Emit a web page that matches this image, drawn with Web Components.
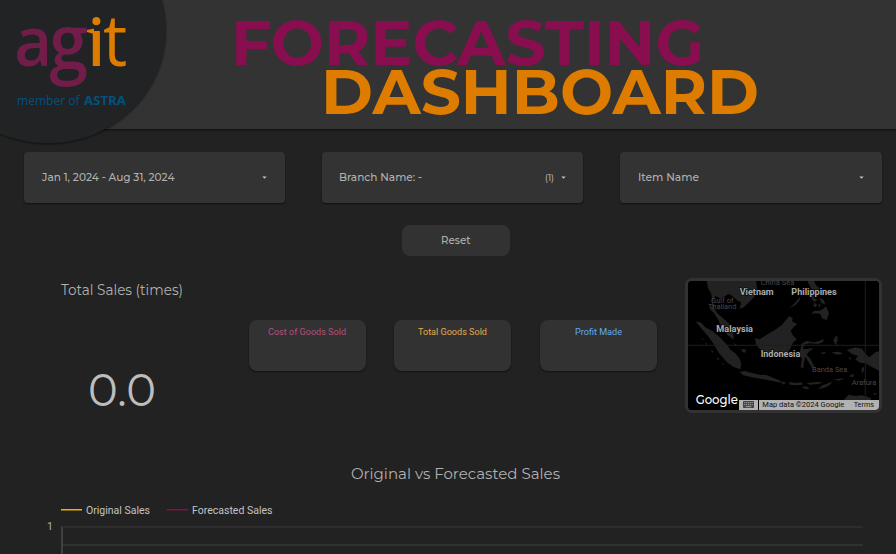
<!DOCTYPE html>
<html lang="en">
<head>
<meta charset="utf-8">
<title>Forecasting Dashboard</title>
<style>
html,body{margin:0;background:#222;height:554px;overflow:hidden}
body{font-family:Montserrat,Inter,sans-serif;color:#b1b1b1}
</style>
</head>
<body>
<forecast-dashboard></forecast-dashboard>
<script>
// A single line of text set to an exact measure.
class FitText extends HTMLElement{
  connectedCallback(){
    const a=(n,d)=>this.getAttribute(n)||d;
    const w=a('w',100),h=a('h',16);
    this.attachShadow({mode:'open'}).innerHTML=`<style>:host{display:block;flex:none;width:${w}px;height:${h}px}svg{display:block;overflow:visible}</style>
    <svg width="${w}" height="${h}"><text x="0" y="${a('base',12)}" textLength="${w}" lengthAdjust="spacingAndGlyphs" font-family="${a('font','Montserrat, Inter')}, sans-serif" font-size="${a('size',11)}" font-weight="${a('weight',400)}" fill="${a('color','#b1b1b1')}">${this.textContent}</text></svg>`;
  }
}
customElements.define('fit-text',FitText);

class BrandLogo extends HTMLElement{
  connectedCallback(){
    this.attachShadow({mode:'open'}).innerHTML=`<style>:host{display:block;width:170px;height:150px}svg{display:block;overflow:visible}.disc{filter:drop-shadow(0 1px 1px rgba(0,0,0,.5))}</style>
    <svg width="170" height="150"><ellipse class="disc" cx="48" cy="30" rx="118" ry="113.3" fill="#212324"/>
    <g font-family="Open Sans, sans-serif">
      <text transform="translate(14.2 65.6) scale(.96 1)" font-size="68" font-weight="600" fill="#721c49">a</text>
      <text transform="translate(49.3 68.6) scale(.92 1)" font-size="76" font-weight="600" fill="#721c49">g</text>
      <text transform="translate(87.7 66) scale(.95 1)" font-size="65" font-weight="600" fill="#de7c00">i</text>
      <text transform="translate(103 65.6) scale(1 1.06)" font-size="68" font-weight="500" fill="#de7c00">t</text>
    </g>
    <path d="M87 30L94 28.6V34L87 32Z" fill="#de7c00"/>
    <text x="17" y="104.8" font-family="Open Sans, sans-serif" font-size="12.8" fill="#01517f" textLength="62.5" lengthAdjust="spacingAndGlyphs">member of</text>
    <text x="84" y="104.8" font-family="Open Sans, sans-serif" font-size="12.8" font-weight="700" fill="#01517f" textLength="42" lengthAdjust="spacingAndGlyphs">ASTRA</text></svg>`;
  }
}
customElements.define('brand-logo',BrandLogo);

class PageHeader extends HTMLElement{
  connectedCallback(){
    this.attachShadow({mode:'open'}).innerHTML=`<style>:host{display:block;flex:none;position:relative;box-sizing:border-box;height:129px;background:#333;box-shadow:0 1px 2px rgba(0,0,0,.6);padding-top:17px}
    brand-logo{position:absolute;left:0;top:0}
    fit-text{margin-left:231px}.b{margin-left:321px}</style>
    <fit-text w="473" h="49" base="48" size="62.6" weight="700" color="#880e4f">FORECASTING</fit-text>
    <fit-text class="b" w="438" h="49" base="48" size="62.6" weight="700" color="#de7c00">DASHBOARD</fit-text>
    <brand-logo></brand-logo>`;
  }
}
customElements.define('page-header',PageHeader);

class FilterBox extends HTMLElement{
  connectedCallback(){
    this.attachShadow({mode:'open'}).innerHTML=`<style>:host{display:flex;align-items:center;box-sizing:border-box;height:51px;padding:0 18px 0 17.5px;background:#333;border-radius:4px;box-shadow:0 1px 2px rgba(0,0,0,.55)}
    .s{flex:1}svg{display:block;margin-left:7px}</style><slot></slot><span class="s"></span><slot name="count"></slot><svg width="5" height="3"><path d="M.3 .6H4.7L2.5 2.8Z" fill="#c4c4c4"/></svg>`;
  }
}
customElements.define('filter-box',FilterBox);

class ResetButton extends HTMLElement{
  connectedCallback(){
    this.attachShadow({mode:'open'}).innerHTML=`<style>:host{display:flex;flex:none;align-items:center;justify-content:center;width:108px;height:31px;border-radius:8px;background:#323232}</style><slot></slot>`;
  }
}
customElements.define('reset-button',ResetButton);

class MetricCard extends HTMLElement{
  connectedCallback(){
    this.attachShadow({mode:'open'}).innerHTML=`<style>:host{display:flex;justify-content:center;box-sizing:border-box;width:117px;height:51px;padding:4px 1px 0 0;border-radius:8px;background:#323232;box-shadow:0 1px 2px rgba(0,0,0,.5)}</style><slot></slot>`;
  }
}
customElements.define('metric-card',MetricCard);

class RegionMap extends HTMLElement{
  connectedCallback(){
    const lab=(t,x,y,w)=>`<text x="${x}" y="${y}" textLength="${w}" lengthAdjust="spacingAndGlyphs">${t}</text>`;
    this.attachShadow({mode:'open'}).innerHTML=`<style>:host{display:block;box-sizing:border-box;width:197px;height:135px;border:3px solid #323232;border-radius:7px;background:#000;overflow:hidden}svg{display:block}</style>
    <svg width="191" height="129" viewBox="24 33 573 387">
    <rect x="24" y="33" width="573" height="387" fill="#000"/>
    <g fill="#222">
    <path d="M80 33H228L232 60 222 82 202 102 188 114 178 116 184 98 170 90 158 78 145 72 132 80 124 86 106 78 99 94 101 112 112 130 128 144 146 160 157 180 162 204 158 208 142 194 126 176 114 148 101 128 92 120 97 98 94 72 84 54Z"/>
    <path d="M47 154L64 158 76 172 98 184 122 204 141 224 152 240 166 250 178 264 184 282 181 298 162 292 140 276 116 248 101 222 84 198 66 178Z"/>
    <path d="M178 306L194 303 214 308 238 314 258 315 276 322 298 331 306 339 282 334 250 328 216 322 190 316Z"/>
    <path d="M225 204L238 208 254 198 270 188 288 178 306 164 318 150 328 138 338 144 336 154 351 162 342 170 332 182 340 198 350 208 339 218 330 238 318 254 300 260 276 252 252 248 238 236 228 222Z"/>
    <path d="M364 222L378 213 404 217 424 211 430 206 430 215 414 222 390 220 372 224 369 238 384 236 401 234 386 246 380 254 392 268 402 288 398 296 387 278 376 260 372 276 370 294 362 292 366 268 358 252 362 236Z"/>
    <path d="M329 114L342 101 354 88 361 82 358 92 346 105Z"/>
    <path d="M390 69L404 72 400 82 412 90 402 96 396 88ZM402 98L412 104 406 112 400 108ZM418 84L432 90 436 104 424 98ZM414 106L422 100 420 112ZM393 132L404 122 418 122 430 116 438 108 447 130 440 150 427 146 421 132 408 130Z"/>
    <path d="M382 33H402L410 49 418 53 414 63 394 57Z"/>
    <path d="M468 197L474 202 470 210 478 208 469 216 474 228 464 220 460 210Z"/>
    <path d="M500 240L526 232 546 236 556 252 568 262 587 246 597 244V302L574 290 556 280 540 278 526 268 534 258 516 252Z"/>
    <path d="M423 248L434 246 438 250 426 253ZM454 247L478 245 489 251 470 254ZM506 262L514 264 510 270ZM545 294L553 290 551 304 545 311Z"/>
    <path d="M304 334L319 338 308 344ZM326 336L348 339 366 337 368 344 346 346 330 344ZM378 339L403 337 427 335 419 341 390 344ZM365 352L379 349 389 358 374 356ZM414 357L428 346 448 338 458 334 450 344 432 354ZM461 328L478 326 494 325 478 332ZM506 318L522 311 519 322Z"/>
    <path d="M493 388L506 374 527 378 544 376 563 380 574 386 568 392H490ZM579 369L592 369 584 375Z"/>
    <path d="M66 204L72 209 67 210ZM76 216L82 222 78 224ZM93 238L101 246 96 248ZM110 260L119 268 113 270ZM126 278L132 282 130 286ZM184 236L198 239 196 248 186 245ZM160 218L170 224 166 229Z"/>
    </g>
    <path d="M24 226H597M556 33V420" stroke="#1e1e1e" stroke-width="3" fill="none"/>
    <g font-family="Roboto, sans-serif" font-size="24" fill="#484848">${lab('China Sea',242,45,101)}${lab('Gulf of',93,98,68)}${lab('Thailand',84,118,85)}${lab('Banda Sea',396,307,106)}${lab('Arafura',515,346,74)}</g>
    <g font-family="Roboto, sans-serif" font-size="27" font-weight="700" fill="#adadad" stroke="#000" stroke-width="3" paint-order="stroke">${lab('Vietnam',179,74,102)}${lab('Philippines',334,74,136)}${lab('Malaysia',109,186,110)}${lab('Indonesia',242,260,119)}</g>
    <text x="47" y="402" font-family="Montserrat, Lato, sans-serif" font-size="40" font-weight="500" fill="#fff" textLength="127" lengthAdjust="spacingAndGlyphs">Google</text>
    <path d="M177 390H234V420H177ZM237 390H597V420H237Z" fill="#b2b2b2"/>
    <rect x="189" y="393" width="33" height="21" rx="2" fill="#444"/>
    <path d="M193 398H219M193 404H219" stroke="#b2b2b2" stroke-width="3" stroke-dasharray="3 2.5"/><path d="M197 410H214" stroke="#b2b2b2" stroke-width="2.5"/>
    <g font-family="Roboto, sans-serif" font-size="24" fill="#101010">${lab('Map data ©2024 Google',247,411,246)}${lab('Terms',521,411,61)}</g>
    </svg>`;
  }
}
customElements.define('region-map',RegionMap);

class SalesChart extends HTMLElement{
  connectedCallback(){
    this.attachShadow({mode:'open'}).innerHTML=`<style>:host{display:block;flex:none}
    .title{margin-left:351px}.legend{display:flex;align-items:center;height:16px;margin:18px 0 0 61px}
    .legend i{width:21px;height:1px;border-bottom:1px solid;margin-right:4px}
    .legend i+fit-text+i{margin-left:17px}.plot{display:flex;align-items:flex-start;margin-left:47px}
    .grid{box-sizing:border-box;margin:8px 0 0 9px;width:802px;height:40px;border-left:2px solid #414141;border-top:2px solid #2d2d2d}
    .grid:before{content:"";display:block;height:2px;background:#313131;margin-top:16px}</style>
    <fit-text class="title" w="209" h="20" base="15" size="15.4">Original vs Forecasted Sales</fit-text>
    <div class="legend"><i style="background:#f0b000;border-color:#8a660d"></i><fit-text w="64" h="14" base="11" size="11" font="Roboto" color="#c4c4c4">Original Sales</fit-text><i style="background:#880e4f;border-color:#541637"></i><fit-text w="80.5" h="14" base="11" size="11" font="Roboto" color="#c4c4c4">Forecasted Sales</fit-text></div>
    <div class="plot"><fit-text w="6" h="14" base="12" size="10.5" font="Roboto">1</fit-text><div class="grid" style="margin-left:8px"></div></div>`;
  }
}
customElements.define('sales-chart',SalesChart);

class ForecastDashboard extends HTMLElement{
  connectedCallback(){
    this.attachShadow({mode:'open'}).innerHTML=`<style>:host{display:flex;flex-direction:column;width:896px;height:554px;overflow:hidden;background:#222}
    .filters{display:grid;flex:none;grid-template-columns:261px 261px 262px;gap:37px;padding:23px 0 0 24px}
    .branch{padding:0 17px}
    reset-button{margin:22px 0 0 402px}
    .kpi{display:flex;flex:none;align-items:flex-start;margin-top:22px;height:135px}
    .total{width:188px;padding-left:61px}.value{margin:75px 0 0 27px}
    .cards{display:flex;padding-top:42px;width:436px}
    .cards :nth-child(2){margin:0 29px 0 28px}
    sales-chart{margin-top:51px}</style>
    <page-header></page-header>
    <div class="filters">
      <filter-box><fit-text w="132.5" base="11.4" size="11" weight="500">Jan 1, 2024 - Aug 31, 2024</fit-text></filter-box>
      <filter-box class="branch"><fit-text w="83" base="11.4" size="11" weight="500">Branch Name: -</fit-text><fit-text slot="count" w="9" base="10.8" size="9.2" weight="500">(1)</fit-text></filter-box>
      <filter-box><fit-text w="61" base="11.4" size="11" weight="500">Item Name</fit-text></filter-box>
    </div>
    <reset-button><fit-text w="29.5" base="11.4" size="11" weight="500">Reset</fit-text></reset-button>
    <div class="kpi">
      <div class="total"><fit-text w="122" h="22" base="17" size="14">Total Sales (times)</fit-text><fit-text class="value" w="68" h="36" base="31" size="45.5" color="#bdbdbd">0.0</fit-text></div>
      <div class="cards"><metric-card><fit-text w="78" base="11" size="9.8" font="Roboto" color="#b34f7f">Cost of Goods Sold</fit-text></metric-card><metric-card><fit-text w="69" base="11" size="9.8" font="Roboto" color="#e8a84d">Total Goods Sold</fit-text></metric-card><metric-card><fit-text w="47" base="11" size="9.8" font="Roboto" color="#62aaec">Profit Made</fit-text></metric-card></div>
      <region-map></region-map>
    </div>
    <sales-chart></sales-chart>`;
  }
}
customElements.define('forecast-dashboard',ForecastDashboard);
</script>
</body>
</html>
